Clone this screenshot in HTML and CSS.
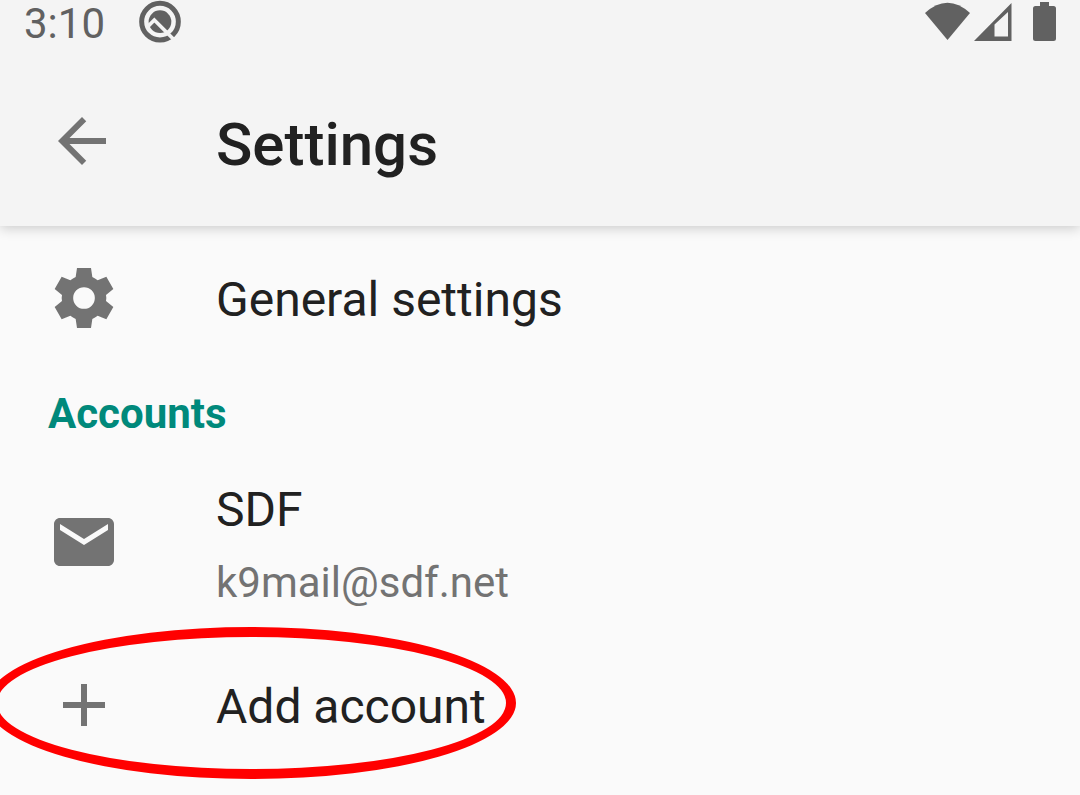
FILE: index.html
```html
<!DOCTYPE html>
<html lang="en">
<head>
<meta charset="utf-8">
<meta name="viewport" content="width=device-width">
<title>Settings</title>
<link rel="stylesheet" href="styles.css">
</head>
<body>
<header class="header">
  <div class="status">
    <span class="clock">3:10</span>
    <svg class="status-q" viewBox="414 0 132 132" aria-hidden="true">
      <circle class="q-ring" cx="480" cy="65" r="55"/>
      <circle cx="480" cy="65" r="34"/>
      <path class="q-cut" d="M441 82L463 60L526 123"/>
    </svg>
    <svg class="status-icons" viewBox="0 0 132 44" aria-hidden="true">
      <path d="M0 13Q22.500 -7.500 45 13L22.500 40Z"/>
      <path fill-rule="evenodd" d="M49 41L86.500 3V41ZM69.500 24.500V36.500H83V12Z"/>
      <path d="M115 2h9v4h4.500q2.500 0 2.500 2.500v30q0 2.500-2.500 2.500h-18q-2.500 0-2.500-2.500v-30q0-2.500 2.500-2.500h4.500z"/>
    </svg>
  </div>
  <div class="toolbar">
    <button class="back" type="button" aria-label="Back">
      <svg class="icon" viewBox="0 0 24 24"><path d="M20 11H7.830l5.590-5.590L12 4l-8 8 8 8 1.410-1.410L7.830 13H20z"/></svg>
    </button>
    <h1 class="title">Settings</h1>
  </div>
</header>
<main class="list">
  <a class="row" href="#general">
    <svg class="icon" viewBox="54 36 216 216" aria-hidden="true"><path fill-rule="evenodd" d="M141 54H183L187 81Q195 85 203 91L229 80L250 117L228 135Q230 144 228 153L250 171L229 208L203 197Q195 203 187 207L183 234H141L137 207Q129 203 121 197L95 208L74 171L96 153Q94 144 96 135L74 117L95 80L121 91Q129 85 137 81ZM162 111.500a32.500 32.500 0 1 0 0 65a32.500 32.500 0 1 0 0-65z"/></svg>
    <span class="label">General settings</span>
  </a>
  <h2 class="section">Accounts</h2>
  <a class="row row-account" href="#sdf">
    <svg class="icon" viewBox="0 0 24 24" aria-hidden="true"><path d="M20 4H4c-1.100 0-2 .900-2 2v12c0 1.100.900 2 2 2h16c1.100 0 2-.900 2-2V6c0-1.100-.900-2-2-2zm0 4l-8 5-8-5V6l8 5 8-5z"/></svg>
    <span class="texts">
      <span class="label">SDF</span>
      <span class="email">k9mail@sdf.net</span>
    </span>
  </a>
  <a class="row" href="#add">
    <svg class="icon" viewBox="0 0 24 24" aria-hidden="true"><path d="M19 13h-6v6h-2v-6H5v-2h6V5h2v6h6z"/></svg>
    <span class="label">Add account</span>
    <span class="highlight"></span>
  </a>
</main>
</body>
</html>
```
FILE: styles.css
```css
* { box-sizing: border-box; }
body {
  margin: 0;
  min-height: 100vh;
  background: #fafafa;
  color: #212121;
  font-family: Roboto, "Noto Sans", sans-serif;
  font-size: 48px;
  line-height: 56px;
  overflow-x: hidden;
}
.header {
  position: relative;
  background: #f4f4f4;
  box-shadow: 0 2px 12px rgba(0, 0, 0, 0.2);
}
.status {
  display: flex;
  align-items: flex-start;
  padding: 0 23px 0 24px;
  color: #616161;
  fill: #616161;
}
.clock { font-size: 42px; line-height: 48px; }
.status-q { width: 44px; height: 44px; margin-left: 33px; }
.q-ring { fill: none; stroke: #616161; stroke-width: 15; }
.q-cut { fill: none; stroke: #f4f4f4; stroke-width: 11; }
.status-icons { width: 132px; height: 44px; margin-left: auto; }
.toolbar {
  display: flex;
  align-items: center;
  gap: 98px;
  padding: 8px 46px 0;
  min-height: 178px;
}
.back { display: block; padding: 0; border: 0; background: none; }
.icon { display: block; flex: none; width: 72px; height: 72px; fill: #737373; }
.title { margin: 0; padding-top: 8px; font-size: 60px; line-height: 72px; font-weight: 500; }
.row {
  position: relative;
  display: flex;
  align-items: center;
  gap: 96px;
  min-height: 144px;
  padding: 0 48px;
  color: inherit;
  text-decoration: none;
}
.label { display: block; padding-top: 3px; }
.section {
  margin: 0;
  padding: 20px 48px 13px;
  font-size: 42px;
  line-height: 48px;
  font-weight: 700;
  color: #00897b;
}
.row-account { min-height: 182px; }
.texts { display: flex; flex-direction: column; gap: 17px; padding-top: 5px; }
.email { font-size: 42px; line-height: 56px; color: #737373; }
.highlight {
  position: absolute;
  left: -13px;
  top: -6px;
  width: 529px;
  height: 152px;
  border: 10px solid #f00;
  border-radius: 50%;
  pointer-events: none;
}
```
